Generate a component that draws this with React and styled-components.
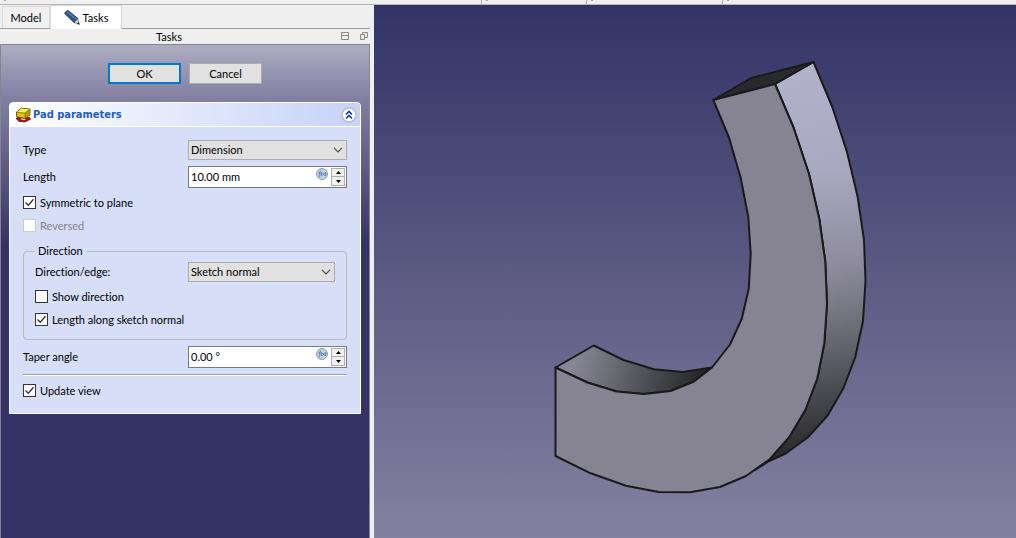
import React from "react";
import styled, { createGlobalStyle } from "styled-components";

const GlobalStyle = createGlobalStyle`
  *, *::before, *::after { box-sizing: border-box; }
  body {
    margin: 0;
    font-family: Lato, "Liberation Sans", sans-serif;
    font-size: 11px;
    font-variant-ligatures: none;
    line-height: 14px;
    color: #000;
    background: #efefef;
  }
  button, input, select { font: inherit; color: inherit; }
`;

const Window = styled.div`
  display: flex;
  flex-direction: column;
  min-height: 100vh;
`;

const ToolbarEdge = styled.div`
  flex: none;
  display: flex;
  height: 5px;
  border-bottom: 1px solid #b4b4b4;
  background: #efefef;
`;

const ToolbarSegment = styled.div`
  flex: ${(p) => (p.$width ? `0 0 ${p.$width}` : "1")};
  border-right: ${(p) => (p.$width ? "1px solid #a8a8a8" : "none")};
  padding-left: 4px;

  &::before {
    content: "";
    display: block;
    width: 2px;
    height: 1px;
    background: #a8a8a8;
  }
`;

const Workspace = styled.div`
  flex: 1;
  display: flex;
`;

const Dock = styled.aside`
  flex: 0 0 374px;
  display: flex;
  flex-direction: column;
  min-width: 0;
  padding-right: 4px;
`;

const TabBar = styled.div`
  display: flex;
  align-items: flex-end;
  height: 24px;
  padding-left: 2px;
  border-bottom: 1px solid #a0a0a0;
`;

const Tab = styled.button`
  display: flex;
  align-items: center;
  justify-content: center;
  gap: 3px;
  width: ${(p) => (p.$active ? "72px" : "48px")};
  height: ${(p) => (p.$active ? "24px" : "22px")};
  margin-bottom: ${(p) => (p.$active ? "-1px" : "0")};
  padding: 0;
  border: 1px solid #d9d9d9;
  border-bottom: 0;
  background: ${(p) => (p.$active ? "#fff" : "#f0f0f0")};
`;

const DockTitle = styled.header`
  display: grid;
  grid-template-columns: 1fr 30px;
  align-items: center;
  height: 15px;
  padding-right: 2px;

  h1 {
    margin: 0;
    font-size: 11px;
    font-weight: 400;
    text-align: center;
  }
`;

const TitleActions = styled.div`
  display: flex;
  gap: 10px;
  justify-content: flex-end;
`;

const IconButton = styled.button`
  display: flex;
  padding: 0;
  border: 0;
  background: none;
`;

const TaskArea = styled.main`
  flex: 1;
  padding: 18px 8px 24px;
  border: 1px solid #85858f;
  border-bottom: 0;
  background: linear-gradient(#adadc2, #8481a3 50px, #333366 200px);
`;

const DialogButtons = styled.div`
  display: flex;
  justify-content: center;
  gap: 8px;
  margin-bottom: 18px;
`;

const PushButton = styled.button`
  width: 73px;
  height: 21px;
  padding: 0;
  border: ${(p) => (p.$default ? "2px solid #0078d7" : "1px solid #adadad")};
  background: #e1e1e1;
`;

const Card = styled.section`
  border: 1px solid #fff;
  border-radius: 4px 4px 0 0;
  background: #d6def8;
`;

const CardHeader = styled.header`
  display: flex;
  align-items: center;
  gap: 1px;
  height: 24px;
  padding: 0 3px 0 5px;
  border-bottom: 1px solid #fff;
  border-radius: 3px 3px 0 0;
  background: linear-gradient(90deg, #fff, #c6d2f7);

  h2 {
    flex: 1;
    margin: 0;
    font-family: "DejaVu Sans Condensed", "DejaVu Sans", sans-serif;
    font-size: 11px;
    font-weight: 700;
    color: #215dc6;
  }
`;

const CardBody = styled.div`
  display: flex;
  flex-direction: column;
  gap: 6px;
  padding: 13px 13px 14px;
`;

const Field = styled.div`
  display: grid;
  grid-template-columns: ${(p) => (p.$nested ? "153px" : "165px")} minmax(0, 1fr);
  align-items: center;
`;

const ComboFrame = styled.div`
  display: grid;
  align-items: center;

  > * { grid-area: 1 / 1; }
  svg { justify-self: end; margin-right: 4px; pointer-events: none; }
`;

const ComboSelect = styled.select`
  appearance: none;
  width: 100%;
  height: 20px;
  padding: 0 16px 0 2px;
  border: 1px solid #adadad;
  border-radius: 0;
  background: #e1e1e1;
`;

const SpinFrame = styled.div`
  display: flex;
  height: 22px;
  padding: 1px;
  border: 1px solid #7a7a7a;
  background: #fff;

  input {
    flex: 1;
    min-width: 0;
    padding: 0 1px;
    border: 0;
    outline: 0;
    background: none;
  }
`;

const FormulaButton = styled(IconButton)`
  align-self: flex-start;
  margin-right: 3px;
`;

const Stepper = styled.div`
  display: grid;
  grid-template-rows: 1fr 1fr;
  width: 14px;

  button {
    display: flex;
    align-items: center;
    justify-content: center;
    padding: 0;
    border: 1px solid #b0b0b0;
    background: #f0f0f0;
  }
  button + button { margin-top: -1px; }
`;

const CheckLabel = styled.label`
  display: flex;
  align-items: center;
  gap: 4px;
  height: 17px;
  color: ${(p) => (p.$disabled ? "#83838a" : "inherit")};
`;

const BoxFrame = styled.span`
  display: grid;

  > * { grid-area: 1 / 1; }
  svg { visibility: hidden; pointer-events: none; }
  input:checked + svg { visibility: visible; }
`;

const BoxInput = styled.input`
  appearance: none;
  width: 13px;
  height: 13px;
  margin: 0;
  border: 1px solid #333;
  background: #fff;

  &:disabled { border-color: #ccc; }
`;

const Group = styled.fieldset`
  display: flex;
  flex-direction: column;
  gap: 6px;
  min-width: 0;
  margin: 0;
  padding: 0 11px 11px;
  border: 1px solid #bcbcbf;
  border-radius: 4px;

  legend {
    padding: 0 3px;
    line-height: 22px;
  }
`;

const Separator = styled.hr`
  width: 100%;
  height: 2px;
  margin: 0;
  border: 0;
  border-top: 1px solid #a0a0a0;
  border-bottom: 1px solid #fff;
`;

const Viewport = styled.section`
  flex: 1;
  display: flex;
  min-width: 0;
  background: linear-gradient(#333366, #8481a0);

  svg { display: block; width: 100%; }
`;

const PencilIcon = () => (
  <svg width="16" height="16" viewBox="0 0 16 16" aria-hidden="true">
    <path d="M.8 3.600Q.6 2.800 1.400 2L3 .8Q4 .2 4.800 1L14 8.600 10.400 13z" fill="#2f567f" stroke="#1c3854" strokeWidth=".8" />
    <path d="M3.200 1.800 12.700 9.600" stroke="#5d87b0" strokeWidth="1.100" />
    <path d="m10.400 12.600 3.400-3.800 1.500 5.600z" fill="#e4e2dc" stroke="#47525c" strokeWidth=".6" />
    <path d="m13 13.700 1.700-1.600.8 2.500z" fill="#111" />
  </svg>
);

const DockIcon = () => (
  <svg width="9" height="9" viewBox="0 0 9 9" fill="none" stroke="#8a8a8a" aria-hidden="true">
    <path d="M1.500.5h7v7h-7zM1.500 3.500h7" />
  </svg>
);

const FloatIcon = () => (
  <svg width="9" height="9" viewBox="0 0 9 9" fill="none" stroke="#8a8a8a" aria-hidden="true">
    <path d="M3.500 2.500v-2h5v5h-3M1.500 2.500h4v5h-4z" />
  </svg>
);

const PadIcon = () => (
  <svg width="17" height="16" viewBox="0 0 17 16" aria-hidden="true">
    <path d="m1 11.5 3-2 11 1.2.5 1.5-5.5 2.8-6-.6z" fill="#a51717" stroke="#5c0909" strokeWidth=".7" />
    <path d="m5 12 3-1 3 1-2 1.3z" fill="#eee4f4" />
    <path d="M1.5 5 6.5 1.2l8.5.9-.1 6-5.2 3.3-7.9-1.5z" fill="#e2c712" stroke="#4f4605" strokeWidth=".9" />
    <path d="M1.8 5.2 6.7 1.6l7.8.8-4.6 3.7z" fill="#fbed55" />
    <path d="m10 6 4.5-3.5v5.3L9.9 11z" fill="#b99c08" />
    <path d="m1.8 5.2 8.2 1 4.7-3.8M10 6.2V11" fill="none" stroke="#716507" strokeWidth=".7" />
  </svg>
);

const CollapseIcon = () => (
  <svg width="16" height="16" viewBox="0 0 16 16" fill="none" aria-hidden="true">
    <circle cx="8" cy="8" r="7" fill="#fff" stroke="#b7bcd6" strokeWidth="1.600" />
    <path d="m5 7.5 3-3 3 3M5 11.5l3-3 3 3" stroke="#12389a" strokeWidth="1.6" />
  </svg>
);

const ChevronIcon = () => (
  <svg width="10" height="6" viewBox="0 0 10 6" fill="none" aria-hidden="true">
    <path d="m1 .8 4 4 4-4" stroke="#505050" strokeWidth="1.2" />
  </svg>
);

const FormulaIcon = () => (
  <svg width="12" height="12" viewBox="0 0 12 12" fill="none" aria-hidden="true">
    <circle cx="6" cy="6" r="5.4" fill="#c3d7ea" stroke="#8297ad" />
    <path d="M5.1 3.2c-1-.5-1.3.4-1.3 1.3V8c0 .7-.3 1-1 .8M2.6 5h2M6 4c-.8 1.2-.8 3 0 4.200M9.200 4c.8 1.200.8 3 0 4.200M6.600 5l2 2.500M8.600 5l-2 2.500" stroke="#4a74a3" strokeWidth=".9" />
  </svg>
);

const CheckIcon = () => (
  <svg width="13" height="13" viewBox="0 0 13 13" fill="none" aria-hidden="true">
    <path d="m2.500 6.500 2.800 2.800 5.200-6" stroke="#333" strokeWidth="1.300" />
  </svg>
);

const ArrowIcon = ({ up }) => (
  <svg width="5" height="3" viewBox="0 0 5 3" aria-hidden="true">
    <path d={up ? "M0 3 2.500 0 5 3z" : "M0 0 2.500 3 5 0z"} fill="#000" />
  </svg>
);

function Combo({ id, label, options, nested }) {
  return (
    <Field $nested={nested}>
      <label htmlFor={id}>{label}</label>
      <ComboFrame>
        <ComboSelect id={id}>
          {options.map((option) => <option key={option}>{option}</option>)}
        </ComboSelect>
        <ChevronIcon />
      </ComboFrame>
    </Field>
  );
}

function SpinBox({ id, label, value }) {
  return (
    <Field>
      <label htmlFor={id}>{label}</label>
      <SpinFrame>
        <input id={id} type="text" defaultValue={value} />
        <FormulaButton type="button" aria-label="Edit formula"><FormulaIcon /></FormulaButton>
        <Stepper>
          <button type="button" aria-label="Increase"><ArrowIcon up /></button>
          <button type="button" aria-label="Decrease"><ArrowIcon /></button>
        </Stepper>
      </SpinFrame>
    </Field>
  );
}

function Check({ label, checked, disabled }) {
  return (
    <CheckLabel $disabled={disabled}>
      <BoxFrame>
        <BoxInput type="checkbox" defaultChecked={checked} disabled={disabled} />
        <CheckIcon />
      </BoxFrame>
      {label}
    </CheckLabel>
  );
}

function PadModel() {
  return (
    <svg viewBox="374 5 642 533" role="img" aria-label="Curved solid pad">
      <defs>
        <linearGradient id="outer" gradientUnits="userSpaceOnUse" x1="790" y1="80" x2="850" y2="460">
          <stop offset="0" stopColor="#b1b1ca" />
          <stop offset=".25" stopColor="#a8a8c0" />
          <stop offset=".5" stopColor="#8d8b9b" />
          <stop offset=".65" stopColor="#6f6f7b" />
          <stop offset=".8" stopColor="#4d4e55" />
          <stop offset=".92" stopColor="#333336" />
          <stop offset="1" stopColor="#222224" />
        </linearGradient>
        <linearGradient id="inner" gradientUnits="userSpaceOnUse" x1="575" y1="355" x2="700" y2="390">
          <stop offset="0" stopColor="#888695" />
          <stop offset=".35" stopColor="#66676f" />
          <stop offset=".7" stopColor="#424347" />
          <stop offset="1" stopColor="#242425" />
        </linearGradient>
      </defs>
      <g stroke="#1a1a1c" strokeWidth="2" strokeLinejoin="round">
        <path fill="url(#outer)" d="M775 84 813.500 62 832.300 107 847 152 857.700 197 864 240 865.500 281 863 321 855.300 357 843.500 388 827.700 415.500 807.700 437.500 785.700 453.500 768 461.700 755 470 770 459 789.300 437 805.300 410 817.300 378.500 824.300 343.500 827 303.500 825.300 262 819.300 219 809 174 793.500 127.500Z" />
        <path fill="url(#inner)" d="M555.500 367.500 593.700 345.500 623.500 360 654 369.300 682.500 372 712 367.500 694 381.500 670.700 391 644 394 616.700 391.500 587.300 382.500Z" />
        <path fill="#29292b" d="M713.300 100 751 78 813.500 62 775 84Z" />
        <path fill="#868492" d="M713.300 100 775 84 793.500 127.500 809 174 819.300 219 825.300 262 827 303.500 824.300 343.500 817.300 378.500 805.300 410 789.300 437 770 459 746 476 720 487 690 492.300 658.700 492 626 485.700 590.700 473.300 555.500 456V367.500L587.300 382.500 616.700 391.500 644 394 670.700 391 694 381.500 712 367.500 730 344.500 741.700 319 748.700 289 750.700 254 748.300 217 740.700 178 729 137.500Z" />
      </g>
    </svg>
  );
}

export default function App() {
  return (
    <Window>
      <GlobalStyle />
      <ToolbarEdge>
        <ToolbarSegment $width="482px" />
        <ToolbarSegment $width="105px" />
        <ToolbarSegment $width="136px" />
        <ToolbarSegment />
      </ToolbarEdge>
      <Workspace>
        <Dock>
          <TabBar role="tablist">
            <Tab type="button" role="tab" aria-selected="false">Model</Tab>
            <Tab type="button" role="tab" aria-selected="true" $active><PencilIcon />Tasks</Tab>
          </TabBar>
          <DockTitle>
            <h1>Tasks</h1>
            <TitleActions>
              <IconButton type="button" aria-label="Toggle overlay"><DockIcon /></IconButton>
              <IconButton type="button" aria-label="Float panel"><FloatIcon /></IconButton>
            </TitleActions>
          </DockTitle>
          <TaskArea>
            <DialogButtons>
              <PushButton type="button" $default>OK</PushButton>
              <PushButton type="button">Cancel</PushButton>
            </DialogButtons>
            <Card>
              <CardHeader>
                <PadIcon />
                <h2>Pad parameters</h2>
                <IconButton type="button" aria-label="Collapse"><CollapseIcon /></IconButton>
              </CardHeader>
              <CardBody>
                <Combo id="type" label="Type" options={["Dimension"]} />
                <SpinBox id="length" label="Length" value="10.00 mm" />
                <Check label="Symmetric to plane" checked />
                <Check label="Reversed" disabled />
                <Group>
                  <legend>Direction</legend>
                  <Combo id="edge" label="Direction/edge:" options={["Sketch normal"]} nested />
                  <Check label="Show direction" />
                  <Check label="Length along sketch normal" checked />
                </Group>
                <SpinBox id="taper" label="Taper angle" value="0.00 °" />
                <Separator />
                <Check label="Update view" checked />
              </CardBody>
            </Card>
          </TaskArea>
        </Dock>
        <Viewport><PadModel /></Viewport>
      </Workspace>
    </Window>
  );
}
